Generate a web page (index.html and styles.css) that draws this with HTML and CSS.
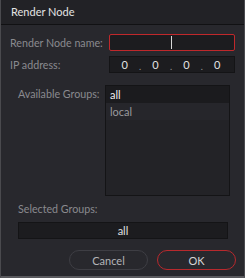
FILE: index.html
```html
<!DOCTYPE html>
<html lang="en">
<head>
<title>Render Node</title>
<meta charset="UTF-8">
<meta name="viewport" content="width=device-width, initial-scale=1.0">
<link rel="stylesheet" href="styles.css">
</head>
<body>

<div class="dialog">
  <div class="titlebar">Render Node</div>

  <div class="fields">
    <label class="field-label" for="nodeName">Render Node name:</label>
    <div class="text-input active" id="nodeName"><span class="caret"></span></div>

    <span class="field-label">IP address:</span>
    <div class="ip-input">
      <span class="octet">0</span><span class="dot">.</span>
      <span class="octet">0</span><span class="dot">.</span>
      <span class="octet">0</span><span class="dot">.</span>
      <span class="octet">0</span>
    </div>
  </div>

  <div class="groups">
    <span class="field-label">Available Groups:</span>
    <ul class="group-list">
      <li class="selected">all</li>
      <li class="alt">local</li>
    </ul>
  </div>

  <div class="selected-groups">
    <span class="field-label">Selected Groups:</span>
    <div class="selected-box">all</div>
  </div>

  <div class="buttons">
    <button class="btn">Cancel</button>
    <button class="btn primary">OK</button>
  </div>
</div>

</body>
</html>
```

FILE: styles.css
```css
body {
  margin: 0;
  background: #28282d;
  font-family: "Lato", "Open Sans", sans-serif;
  font-size: 10.7px;
}

.dialog {
  box-sizing: border-box;
  width: 245px;
  height: 278px;
  background: #28282d;
  border-left: 1px solid #4a4a4e;
  border-right: 1px solid #4a4a4e;
  border-bottom: 2px solid #5a5a5e;
}

.titlebar {
  height: 24px;
  line-height: 24px;
  padding-left: 10px;
  background: #222226;
  border-bottom: 1px solid #111113;
  color: #e4e4e4;
  font-size: 11px;
}

.field-label {
  color: #8a8a8f;
  white-space: nowrap;
  line-height: 17px;
}

.fields {
  display: grid;
  grid-template-columns: 99px 126px;
  row-gap: 5px;
  align-items: center;
  padding: 9px 0 0 9px;
}

.text-input, .ip-input {
  box-sizing: border-box;
  height: 17px;
  background: #1c1c1f;
  border: 1px solid #141416;
}

.text-input {
  position: relative;
  border-radius: 2px;
}

.text-input.active {
  border-color: #c0282b;
}

.caret {
  position: absolute;
  left: 61px;
  top: 1px;
  width: 1px;
  height: 13px;
  background: #d8d8d8;
}

.ip-input {
  display: flex;
  align-items: center;
  justify-content: space-around;
  padding: 0 8px 0 6px;
  color: #e2e2e2;
  font-size: 11px;
}

.ip-input .dot {
  color: #9a9a9a;
  font-size: 9px;
  padding-top: 3px;
}

.groups {
  display: flex;
  gap: 5px;
  padding: 12px 0 0 17px;
}

.groups .field-label {
  width: 82px;
}

.group-list {
  list-style: none;
  margin: 0;
  padding: 0;
  box-sizing: border-box;
  width: 125px;
  height: 111px;
  background: #232327;
  border: 1px solid #141416;
}

.group-list li {
  height: 17px;
  line-height: 17px;
  padding-left: 4px;
  color: #9a9a9e;
  font-size: 11px;
}

.group-list li.selected {
  background: #1b1b1e;
  color: #f0f0f0;
}

.group-list li.alt {
  background: #26262b;
}

.selected-groups {
  padding: 4px 16px 0 17px;
}

.selected-groups .field-label {
  display: block;
  height: 17px;
  margin-bottom: 5px;
}

.selected-box {
  box-sizing: border-box;
  height: 17px;
  line-height: 15px;
  background: #1c1c1f;
  border: 1px solid #141416;
  text-align: center;
  color: #e0e0e0;
  font-size: 11px;
}

.buttons {
  display: flex;
  justify-content: flex-end;
  gap: 9px;
  padding: 11px 8px 0 0;
}

.btn {
  box-sizing: border-box;
  width: 79px;
  height: 20px;
  border-radius: 10px;
  background: #28282d;
  border: 1px solid #3e3e44;
  color: #b4b4b8;
  font-family: "Lato", "Open Sans", sans-serif;
  font-size: 11px;
  padding: 0;
}

.btn.primary {
  border-color: #b8292d;
  color: #d4d4d4;
}
```
